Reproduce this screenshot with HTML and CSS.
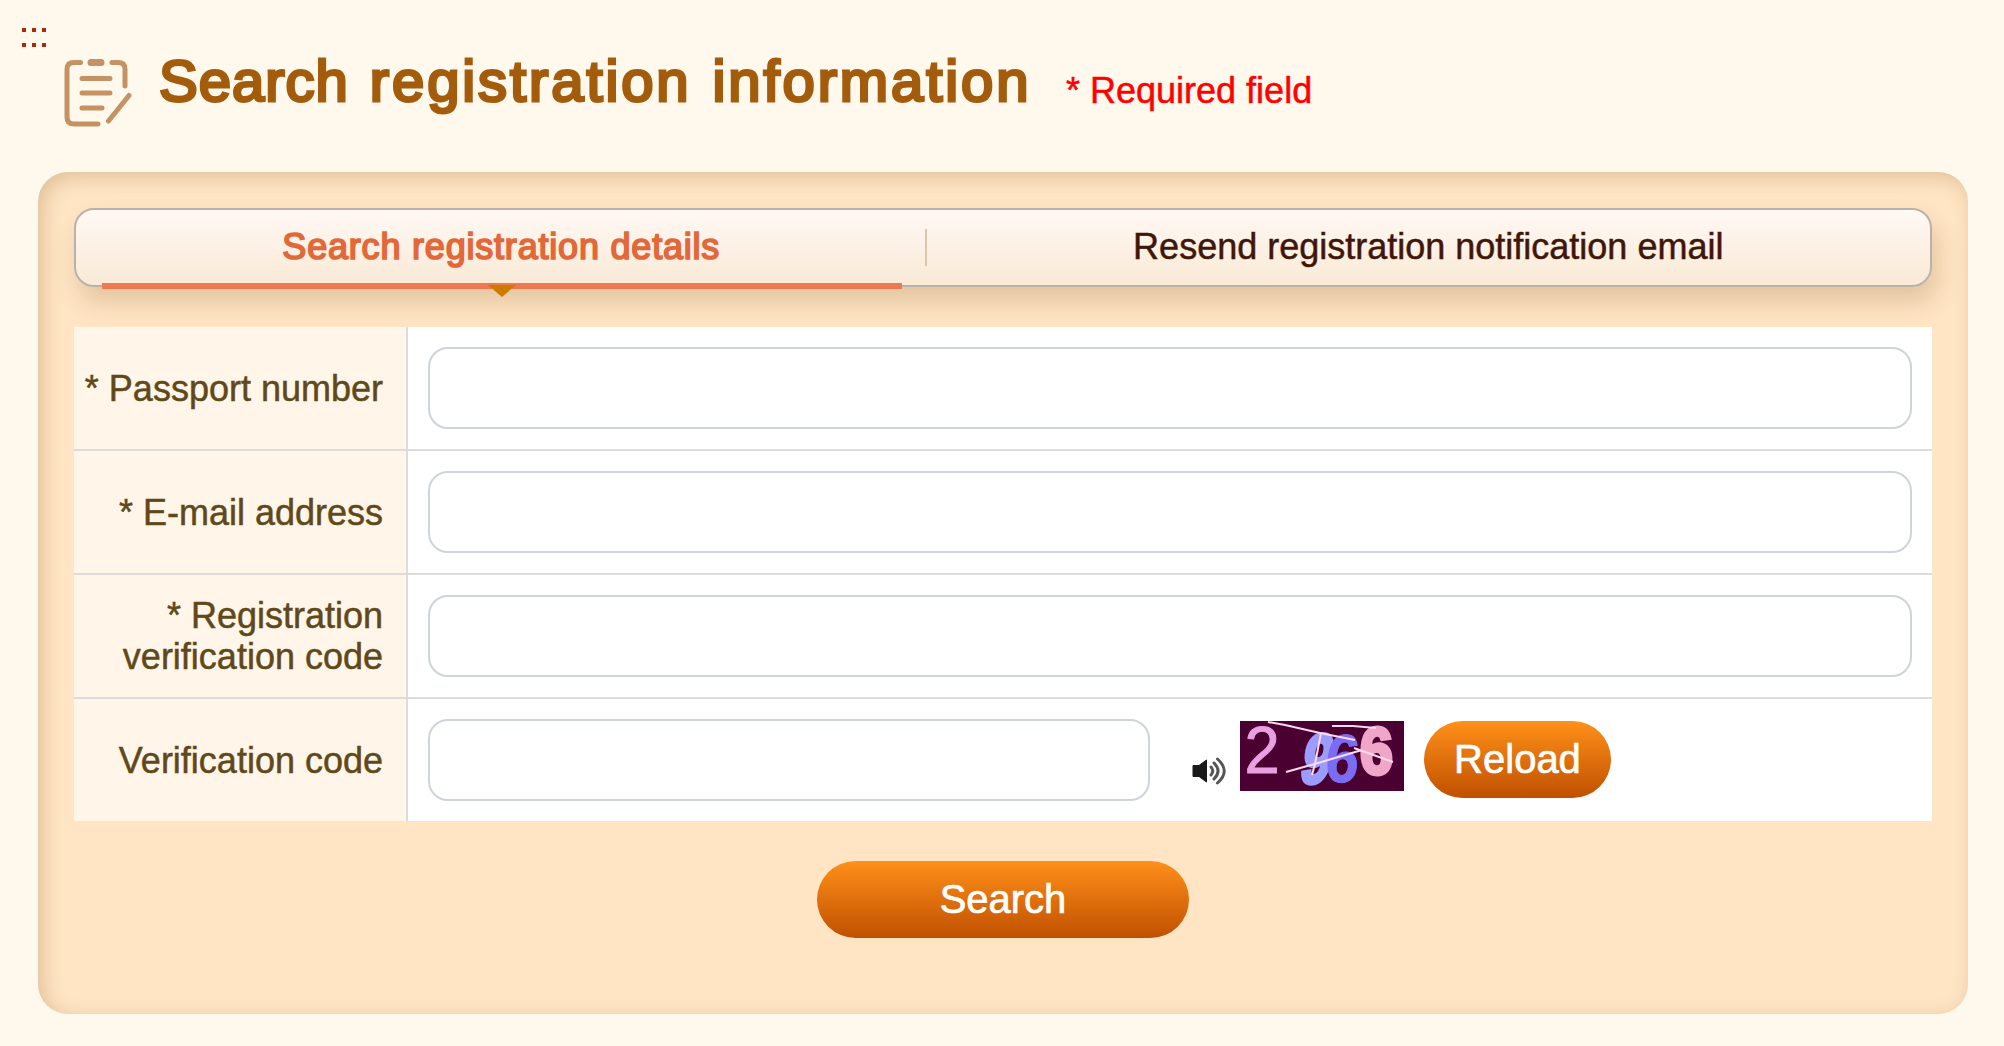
FILE: index.html
```
<!DOCTYPE html>
<html lang="en">

<head>
    <meta charset="UTF-8">
    <meta name="viewport" content="width=device-width, initial-scale=1.0">
    <link rel="stylesheet" href="styles.css">
    <title>Search registration information</title>
</head>

<body>
    <a class="accesskey" href="#" title="Main content">
        <i></i><i></i><i></i><i></i><i></i><i></i>
    </a>

    <div class="header">
        <svg class="title-icon" viewBox="0 0 68 70">
            <g fill="none" stroke="#c49263" stroke-width="5" stroke-linecap="round" stroke-linejoin="round">
                <path d="M16.500 4.500H10Q3 4.500 3 11V59Q3 66 10 66H34" />
                <path d="M48 4.500H54Q61 4.500 61 11V28" />
                <path d="M27 4.500H37" stroke-width="7" />
                <path d="M18 20.500H46M18 35H46M18 50H38M65 37.500L44.500 63" />
            </g>
        </svg>
        <h1><span class="first">Search</span> registration information</h1>
        <span class="required">* Required field</span>
    </div>

    <div class="panel">
        <ul class="tabs">
            <li class="active"><a href="#">Search registration details</a></li>
            <li><a href="#">Resend registration notification email</a></li>
        </ul>

        <form class="form">
            <div class="row">
                <label for="passport">* Passport number</label>
                <div class="cell"><input type="text" id="passport"></div>
            </div>
            <div class="row">
                <label for="email">* E-mail address</label>
                <div class="cell"><input type="text" id="email"></div>
            </div>
            <div class="row">
                <label for="regcode">* Registration<br>verification code</label>
                <div class="cell"><input type="text" id="regcode"></div>
            </div>
            <div class="row">
                <label for="code">Verification code</label>
                <div class="cell">
                    <input type="text" id="code" class="short">
                    <svg class="speaker" viewBox="0 0 34 28">
                        <path d="M1 8.500H7L14.500 3V25L7 19.500H1Z" fill="#1a1a1a" stroke="#1a1a1a" />
                        <g fill="none" stroke="#555" stroke-width="3" stroke-linecap="round">
                            <path d="M19 10Q22.500 14 19 18" />
                            <path d="M22 6Q30 14 22 22" />
                            <path d="M25.500 2Q39 14 25.500 26" />
                        </g>
                    </svg>
                    <svg class="captcha" viewBox="0 0 164 70">
                        <rect width="164" height="70" fill="#4a0030" />
                        <text transform="translate(4.500 52) scale(.96 1)" font-size="66" fill="#e8a0e0" stroke="#e8a0e0">2</text>
                        <text transform="translate(58 62) skewX(-12) scale(.76 1)" font-size="70" font-weight="bold" fill="#9c9cff" stroke="#9c9cff" stroke-width="4">9</text>
                        <text transform="translate(84 61) skewX(-5) scale(.88 1)" font-size="68" font-weight="bold" fill="#7b6cf4" stroke="#7b6cf4">6</text>
                        <text transform="translate(120 53) scale(.88 1)" font-size="67" font-weight="bold" fill="#efa6c8" stroke="#efa6c8" stroke-width="4">6</text>
                        <g fill="none" stroke="#ffd9ee" stroke-width="2">
                            <path d="M28 1L45 4L80 12L115 19M92 5H113L136 7M114 27L153 41" />
                            <path d="M46 51L78 42L122 29M81 12L75 43L72 54" />
                        </g>
                    </svg>
                    <button type="button" class="btn reload">Reload</button>
                </div>
            </div>
        </form>

        <button type="button" class="btn search">Search</button>
    </div>
</body>

</html>
```
FILE: styles.css
```
* {
    margin: 0;
    padding: 0;
    box-sizing: border-box;
}

body {
    background: #fff8ec;
    font-family: "Liberation Sans", Helvetica, Arial, sans-serif;
    font-size: 36px;
    padding: 28px 36px 0 22px;
    -webkit-text-stroke-width: .5px;
}

a {
    color: inherit;
    text-decoration: none;
}

.accesskey {
    display: grid;
    grid-template-columns: repeat(3, 4px);
    gap: 11px 6px;
    width: 24px;
    height: 19px;
}

.accesskey i {
    height: 4px;
    background: #b0280a;
}

.header {
    display: flex;
    align-items: flex-start;
    height: 125px;
    padding-left: 42px;
}

.title-icon {
    width: 68px;
    height: 70px;
    margin-top: 11px;
}

h1 {
    margin: -1px 0 0 27px;
    width: 871px;
    line-height: 70px;
    font-size: 58px;
    font-weight: normal;
    letter-spacing: 2.9px;
    word-spacing: 2px;
    color: #a35c0c;
    white-space: nowrap;
    -webkit-text-stroke-width: 3px;
}

h1 .first {
    letter-spacing: 1px;
}

.required {
    margin: 23px 0 0 36px;
    line-height: 41px;
    color: #f00;
}

.panel {
    height: 842px;
    margin-left: 16px;
    padding: 36px;
    border-radius: 30px;
    background: #ffe5c4;
    box-shadow: inset 5px 5px 20px rgba(120, 60, 0, .22);
}

.tabs {
    display: flex;
    height: 79px;
    margin-bottom: 40px;
    list-style: none;
    color: #3f1608;
    border: 2px solid #b9b2aa;
    border-radius: 20px;
    background: linear-gradient(#fff8f4, #f9ead6);
    box-shadow: 5px 15px 25px rgba(100, 50, 0, .18);
}

.tabs li {
    position: relative;
    width: 1004px;
    line-height: 74px;
    text-align: center;
    white-space: nowrap;
}

.tabs .active {
    width: 851px;
    letter-spacing: .8px;
    word-spacing: 0;
    color: #e2683a;
    -webkit-text-stroke-width: 1.7px;
}

.tabs .active a::before {
    content: "";
    position: absolute;
    left: 26px;
    bottom: -4px;
    width: 800px;
    height: 6px;
    background: #ee7850;
}

/* small arrow under the active tab */
.tabs .active a::after {
    content: "";
    position: absolute;
    left: 412px;
    bottom: -12px;
    border: 14px solid transparent;
    border-top: 12px solid #cc7a00;
    border-bottom: 0;
}

.tabs .active::after {
    content: "";
    position: absolute;
    right: 0;
    top: 19px;
    width: 2px;
    height: 37px;
    background: #d9c6ae;
}

.row {
    display: flex;
    height: 124px;
    border-bottom: 2px solid #dcdcdc;
    background: #fff;
}

.row:last-child {
    height: 122px;
    border-bottom: 0;
}

.row label {
    display: flex;
    align-items: center;
    justify-content: flex-end;
    width: 334px;
    padding-right: 23px;
    border-right: 2px solid #dcdcdc;
    background: #fff6e9;
    color: #60481a;
    line-height: 41px;
    text-align: right;
}

.cell {
    flex: 1;
    display: flex;
    align-items: flex-start;
    padding: 20px;
}

input {
    width: 100%;
    height: 82px;
    padding: 0 16px;
    border: 2px solid #ced4da;
    border-radius: 20px;
    background: #fff;
    font: inherit;
}

input.short {
    width: 722px;
}

.speaker {
    width: 34px;
    height: 28px;
    margin: 38px 14px 0 42px;
}

.captcha {
    width: 164px;
    height: 70px;
    margin: 2px 20px 0 0;
    overflow: visible;
}

.btn {
    display: block;
    height: 77px;
    border: 0;
    border-radius: 39px;
    background: linear-gradient(#ff901a, #c05000);
    color: #fff;
    font-family: inherit;
    font-size: 40px;
    -webkit-text-stroke-width: .7px;
}

.reload {
    width: 187px;
    margin-top: 2px;
}

.search {
    width: 372px;
    margin: 40px auto 0;
}
```
